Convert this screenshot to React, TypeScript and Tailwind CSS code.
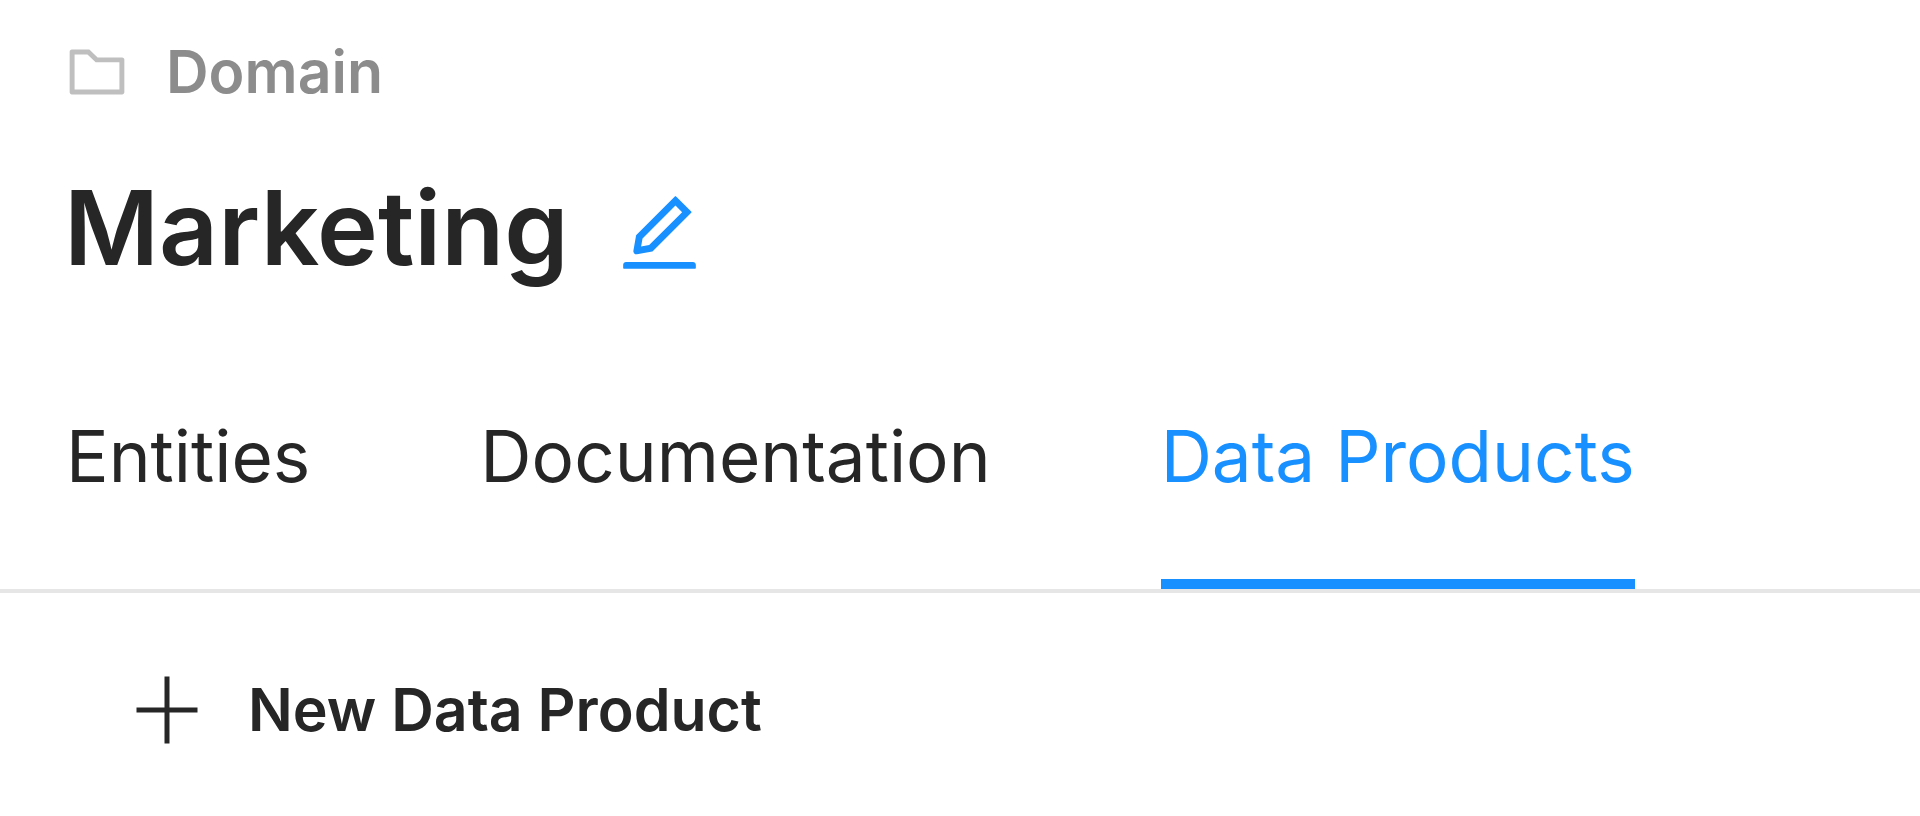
import { AiOutlineEdit, AiOutlineFolder } from "react-icons/ai";

const tabs = ["Entities", "Documentation", "Data Products"];
const activeTab = "Data Products";

function PlusIcon() {
  return (
    <svg viewBox="0 0 62 68" className="h-[68px] w-[62px] shrink-0" fill="none" stroke="currentColor" strokeWidth="5" aria-hidden="true">
      <path d="M31 0.5V67.5M0.5 34H61.5" />
    </svg>
  );
}

export default function App() {
  return (
    <main className="min-h-screen bg-white font-['Inter',sans-serif] text-[#262626]">
      <header className="px-[62px] pt-8">
        <div className="flex items-center gap-[34px]">
          <AiOutlineFolder className="size-[70px] shrink-0 text-[#bfbfbf]" aria-hidden="true" />
          <p className="text-[59px] leading-[80px] font-semibold text-[#8c8c8c]">Domain</p>
        </div>
        <div className="mt-[54px] flex items-center gap-11 pl-0.5">
          <h1 className="text-[103px] leading-[124px] font-semibold">Marketing</h1>
          <button type="button" aria-label="Edit name" className="pt-2 text-[#1890ff]">
            <AiOutlineEdit className="size-[93px]" aria-hidden="true" />
          </button>
        </div>
      </header>
      <nav className="mt-[74px] border-b-4 border-[#e6e6e6] px-[66px]" role="tablist">
        <div className="flex gap-[170px]">
          {tabs.map((tab) => (
            <button
              key={tab}
              type="button"
              role="tab"
              aria-selected={tab === activeTab}
              className={
                tab === activeTab
                  ? "border-b-[10px] border-[#1890ff] pt-10 pb-[71px] text-[71px] leading-[104px] whitespace-nowrap text-[#1890ff]"
                  : "border-b-[10px] border-transparent pt-10 pb-[71px] text-[71px] leading-[104px] whitespace-nowrap"
              }
            >
              {tab}
            </button>
          ))}
        </div>
      </nav>
      <div className="px-[136px] pt-[77px]">
        <button type="button" className="flex items-center gap-[50px] text-[59px] leading-[80px] font-semibold whitespace-nowrap">
          <PlusIcon />
          New Data Product
        </button>
      </div>
    </main>
  );
}
